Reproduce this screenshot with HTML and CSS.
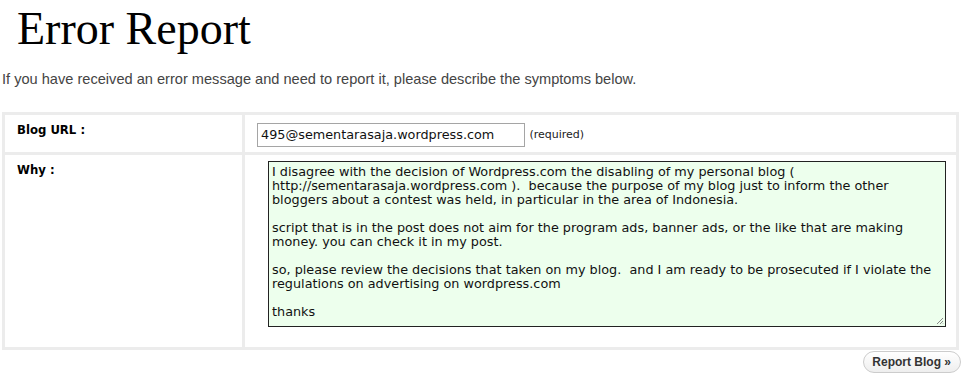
FILE: index.html
```html
<!DOCTYPE html>
<html>
<head>
<meta charset="utf-8">
<link rel="stylesheet" href="styles.css">
</head>
<body>
<h1 class="title">Error Report</h1>
<p class="intro">If you have received an error message and need to report it, please describe the symptoms below.</p>
<table class="form">
  <tr>
    <td class="label"><b>Blog URL :</b></td>
    <td class="field"><span class="input">495@sementarasaja.wordpress.com</span> <span class="req">(required)</span></td>
  </tr>
  <tr>
    <td class="label"><b>Why :</b></td>
    <td class="field"><div class="textarea">I disagree with the decision of Wordpress.com the disabling of my personal blog (
http://sementarasaja.wordpress.com ).  because the purpose of my blog just to inform the other
bloggers about a contest was held, in particular in the area of Indonesia.

script that is in the post does not aim for the program ads, banner ads, or the like that are making
money. you can check it in my post.

so, please review the decisions that taken on my blog.  and I am ready to be prosecuted if I violate the
regulations on advertising on wordpress.com

thanks<svg class="grip" width="8" height="8" viewBox="0 0 8 8"><path d="M7 1L1 7M7 4L4 7M7 6.5L6.5 7" stroke="#888" stroke-width="1"/></svg></div></td>
  </tr>
</table>
<div class="actions"><span class="button">Report Blog &raquo;</span></div>
</body>
</html>
```
FILE: styles.css
```css
html, body { margin: 0; padding: 0; background: #fff; }
body { font-family: "Liberation Sans", Arial, sans-serif; }
.title {
  font-family: "Liberation Serif", "Times New Roman", serif;
  font-weight: normal;
  font-size: 46px;
  line-height: 52px;
  margin: 0;
  padding: 3px 0 0 17px;
  color: #000;
}
.intro {
  margin: 16px 0 0 2px;
  font-size: 14.6px;
  color: #444;
  line-height: 17px;
}
.form {
  margin: 24px 0 0 2px;
  width: 957px;
  border-collapse: separate;
  border-spacing: 3px;
  background: #ececec;
}
.form td {
  background: #fff;
  vertical-align: top;
  padding: 0;
}
.label {
  width: 237px;
  font-family: "DejaVu Sans", Verdana, sans-serif;
  font-size: 11.7px;
  padding: 8px 0 0 12px !important;
  box-sizing: border-box;
}
.field { padding: 8px 0 0 12px !important; }
tr:first-child td { height: 37px; box-sizing: border-box; }
.input {
  display: inline-block;
  width: 263px;
  height: 22px;
  border: 1px solid #a5a5a5;
  padding: 0 0 0 3px;
  font-family: "DejaVu Sans", Verdana, sans-serif;
  font-size: 12.8px;
  line-height: 22px;
  color: #111;
  vertical-align: top;
}
.req {
  font-family: "DejaVu Sans", Verdana, sans-serif;
  font-size: 11px;
  line-height: 24px;
  color: #222;
}
.form tr:nth-child(2) .field { padding: 6px 0 20px 23px !important; }
.textarea {
  position: relative;
  width: 673px;
  height: 153px;
  border: 1px solid #222;
  background: #edffed;
  padding: 3px 0 8px 3px;
  white-space: pre;
  font-family: "DejaVu Sans", Verdana, sans-serif;
  font-size: 12.8px;
  line-height: 14px;
  color: #111;
  overflow: hidden;
}
.grip { position: absolute; right: 1px; bottom: 1px; }
.actions {
  display: flex;
  justify-content: flex-end;
  padding: 1px 2px 0 0;
}
.button {
  display: inline-block;
  font-family: "Liberation Sans", Arial, sans-serif;
  font-weight: bold;
  font-size: 12px;
  color: #333;
  border: 1px solid #ccc;
  border-radius: 11px;
  padding: 3px 9px 3px 8px;
  line-height: 14px;
  background: linear-gradient(#fff, #eee);
}
```
